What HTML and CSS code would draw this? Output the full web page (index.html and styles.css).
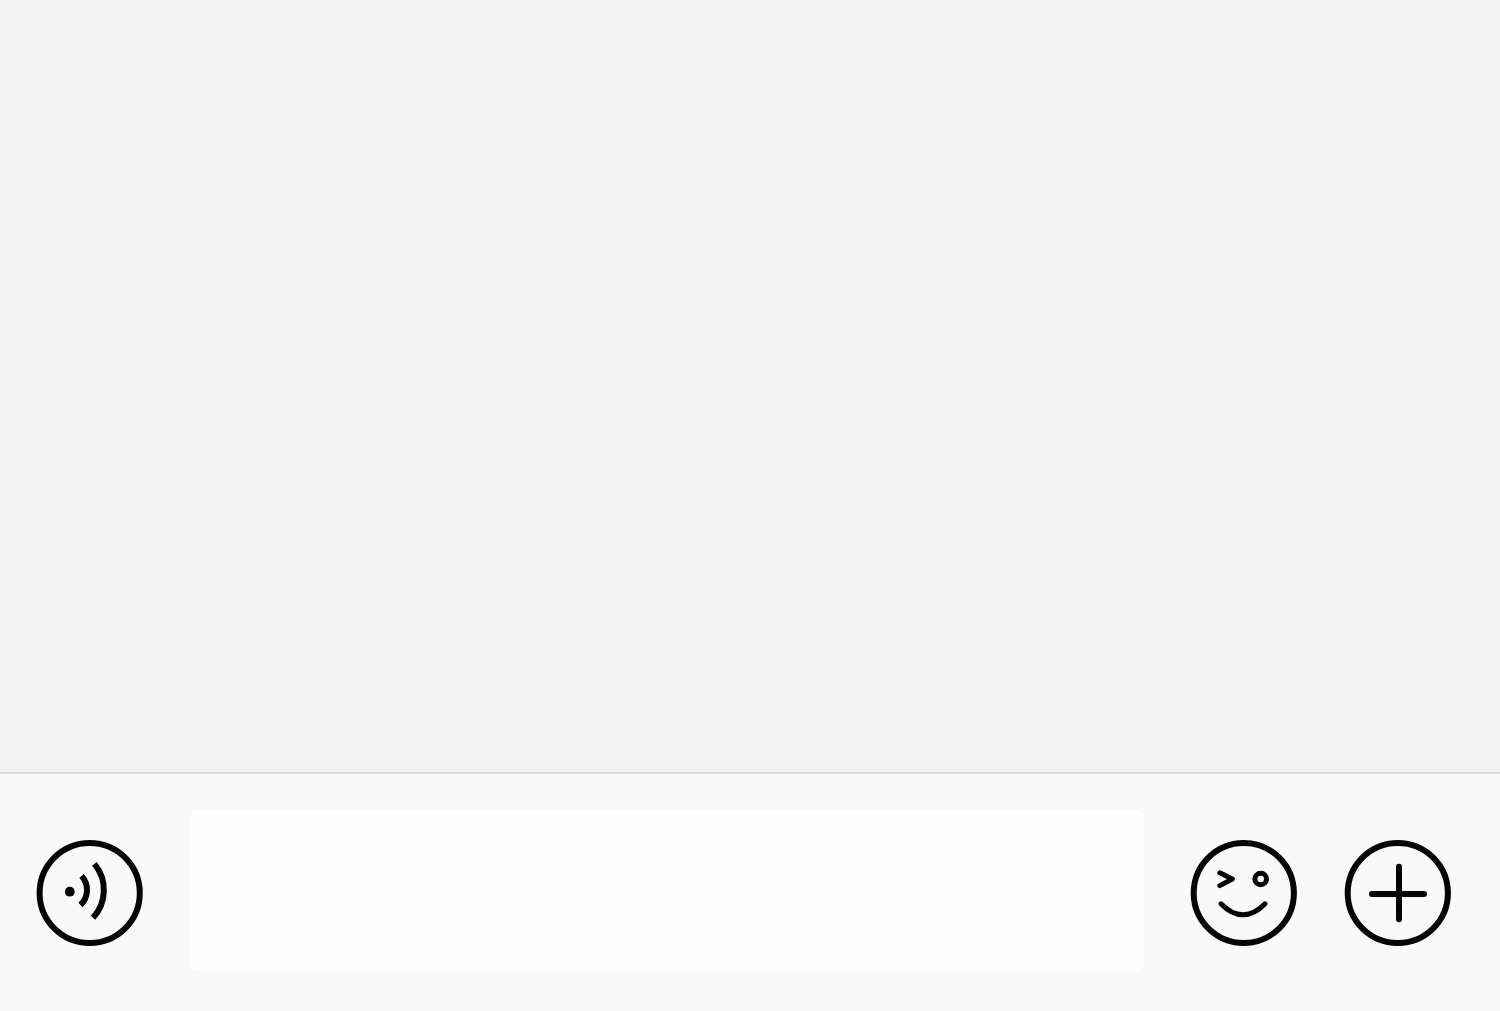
FILE: index.html
```html
<!DOCTYPE html>
<html lang="en">
<head>
<meta charset="utf-8">
<meta name="viewport" content="width=device-width, initial-scale=1">
<title>Chat</title>
<link rel="stylesheet" href="styles.css">
</head>
<body>
<main class="messages"></main>
<form class="composer">
  <button class="icon-button" type="button" aria-label="Voice message">
    <svg class="icon" viewBox="6 6 108 108" aria-hidden="true">
      <circle cx="59.7" cy="60" r="50.1"/>
      <circle class="dot" cx="39.8" cy="58.7" r="4.9"/>
      <path class="wave" d="M51.5 43A20.5 20.5 0 0 1 50.5 72"/>
      <path class="wave" d="M64.4 30.8A41 41 0 0 1 63 84.8"/>
    </svg>
  </button>
  <input class="message-input" type="text" aria-label="Message">
  <button class="icon-button" type="button" aria-label="Emoji">
    <svg class="icon" viewBox="6 6 108 108" aria-hidden="true">
      <circle cx="59.8" cy="60" r="50.1"/>
      <path class="face" d="M35.8 39.8 48.4 46 35.8 52.6"/>
      <circle class="face" cx="76.7" cy="46" r="5.8"/>
      <path class="face" d="M37 70.8Q47.5 81.8 59 81.8T81 70.8"/>
    </svg>
  </button>
  <button class="icon-button" type="button" aria-label="More">
    <svg class="icon" viewBox="6 6 108 108" aria-hidden="true">
      <circle cx="59.8" cy="60" r="50.1"/>
      <path d="M61 33.8V86.3M34 61H86"/>
    </svg>
  </button>
</form>
</body>
</html>
```
FILE: styles.css
```css
* {
  box-sizing: border-box;
}

body {
  display: flex;
  flex-direction: column;
  min-height: 100vh;
  margin: 0;
  background: #f2f2f2;
  font-family: "Liberation Sans", Arial, sans-serif;
}

.messages {
  flex: 1;
}

.composer {
  display: flex;
  align-items: center;
  gap: 46px;
  padding: 36px 48px 40px 36px;
  border-top: 2px solid #dedede;
  background: #f9f9f9;
}

.icon-button {
  flex: none;
  width: 108px;
  height: 108px;
  margin: 4px 0 0;
  padding: 0;
  border: 0;
  border-radius: 50%;
  background: none;
  cursor: pointer;
}

.icon {
  display: block;
  width: 100%;
  height: 100%;
  fill: none;
  stroke: #050505;
  stroke-width: 6;
  stroke-linecap: round;
  stroke-linejoin: round;
}

.dot {
  fill: #050505;
  stroke: none;
}

.wave {
  stroke-linecap: butt;
}

.face {
  stroke-width: 5;
}

.message-input {
  flex: 1;
  min-width: 0;
  height: 161px;
  padding: 0 32px;
  border: 0;
  border-radius: 8px;
  outline: 0;
  background: #fefefe;
  color: #111;
  font: inherit;
  font-size: 56px;
}
```
